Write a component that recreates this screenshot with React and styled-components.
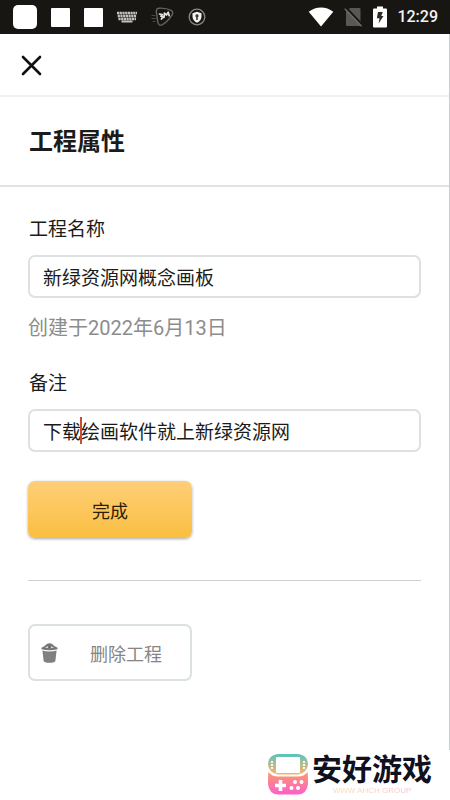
import React from 'react';
import styled, { createGlobalStyle } from 'styled-components';

const GlobalStyle = createGlobalStyle`
  * {
    box-sizing: border-box;
  }

  body {
    margin: 0;
    background: #fff;
    color: #1b1b19;
    font-family: Roboto, 'Noto Sans CJK SC', sans-serif;
  }
`;

const Screen = styled.div`
  display: flex;
  flex-direction: column;
  min-height: 100vh;
`;

const StatusBar = styled.div`
  display: flex;
  align-items: center;
  justify-content: space-between;
  height: 34px;
  padding: 0 12px 0 13px;
  background: #181612;
`;

const StatusGroup = styled.div`
  display: flex;
  align-items: center;
  gap: ${({ $gap }) => $gap}px;
`;

const Tile = styled.span`
  width: ${({ $large }) => ($large ? 24 : 19)}px;
  height: ${({ $large }) => ($large ? 24 : 19)}px;
  border-radius: ${({ $large }) => ($large ? 5 : 1)}px;
  background: #fff;
`;

const Clock = styled.time`
  color: #f4f3f1;
  font-size: 16px;
  font-weight: 500;
  line-height: 20px;
`;

const Panel = styled.div`
  flex: 1;
  border-right: 1px solid #c9cfcf;
`;

const TopBar = styled.div`
  display: flex;
  align-items: center;
  height: 63px;
  padding: 2px 20px 0;
  border-bottom: 2px solid #f0f0f0;
`;

const CloseButton = styled.button`
  display: flex;
  padding: 0;
  border: 0;
  background: none;
  color: #111;
`;

const Heading = styled.header`
  padding: 29px 29px 27px;
  border-bottom: 2px solid #e1e3e3;
`;

const Title = styled.h1`
  margin: 0;
  font-size: 24px;
  font-weight: 700;
  line-height: 32px;
`;

const Form = styled.form`
  padding: 31px 28px 28px;
`;

const Label = styled.label`
  display: block;
  margin-bottom: 13px;
  padding-left: 1px;
  font-size: 19px;
  line-height: 24px;
`;

const Field = styled.div`
  position: relative;
  font-size: 19px;
`;

const TextInput = styled.input`
  display: block;
  width: 100%;
  height: 43px;
  padding: 0 13px;
  border: 2px solid #dde1e1;
  border-radius: 7px;
  outline: 0;
  background: #fff;
  color: #1b1b19;
  font-family: inherit;
  font-size: inherit;
`;

/* text cursor, placed after a number of full-width characters */
const Caret = styled.span`
  position: absolute;
  top: 8px;
  left: calc(14px + ${({ $after }) => $after}em);
  width: 2px;
  height: 27px;
  background: #cf4a30;
`;

const Created = styled.p`
  margin: 18px 0 32px;
  color: #8c8c8c;
  font-size: 20px;
  line-height: 24px;
`;

const Button = styled.button`
  display: block;
  width: 164px;
  height: 57px;
  padding: 0;
  border-radius: 7px;
  font-family: inherit;
  font-size: 18px;
`;

const DoneButton = styled(Button)`
  margin-top: 29px;
  border: 0;
  background: linear-gradient(#ffce78, #f9bf40);
  box-shadow: 0 1px 3px rgba(0, 0, 0, 0.35);
  color: #2b1d06;
`;

const DeleteButton = styled(Button)`
  display: flex;
  align-items: center;
  gap: 32px;
  padding-left: 11px;
  border: 2px solid #dbe1e1;
  background: #fff;
  color: #858585;
`;

const Divider = styled.hr`
  height: 1px;
  margin: 42px 0 43px;
  border: 0;
  background: #cfcfcf;
`;

const Footer = styled.footer`
  display: flex;
  justify-content: flex-end;
  gap: 4px;
  height: 50px;
  padding: 4px 18px 0 0;
`;

const Brand = styled.div`
  display: flex;
  flex-direction: column;
  align-items: center;
  color: #10101e;
  font-size: 30px;
  font-weight: 700;
  line-height: 32px;
`;

const Site = styled.small`
  background: linear-gradient(90deg, #f7dcb8, #f3c3cf);
  background-clip: text;
  color: transparent;
  font-family: 'Liberation Sans', sans-serif;
  font-size: 8px;
  font-weight: 400;
  line-height: 10px;
`;

const KeyboardIcon = () => (
  <svg width="20" height="12" viewBox="0 0 20 12" fill="none" stroke="#c4c3c0">
    <path d="M0 2H20M0.7 5H19.5M1.4 8H19" strokeWidth="2.4" strokeDasharray="2.2 0.5" />
    <path d="M4.5 10.5H15.5" strokeWidth="2" />
  </svg>
);

const PickIcon = () => (
  <svg width="23" height="20" viewBox="0 0 23 20" fill="none" strokeLinecap="round" strokeLinejoin="round">
    <path d="M8 1.2C12 1 17 1.8 20.5 3.6C22.2 4.7 22 6.6 20.8 8.4C18.4 12 14.5 16 11 17.8C8.7 18.8 7.3 17.5 6.8 15.2L5.4 5.4C5 2.7 5.8 1.3 8 1.2Z" stroke="#666460" strokeWidth="1.4" />
    <path d="M1 8.5H4M0.8 11.5H4.5M2 14.5H4" stroke="#4c4a46" />
    <path d="M8.5 7L11.2 7.6L9.8 9.2L12.3 9.6L10.4 12M13 10.5L13.4 6.2L15.5 8L17.2 5.2L18.2 8.7" stroke="#e3e2df" strokeWidth="1.7" />
  </svg>
);

const ShieldIcon = () => (
  <svg width="18" height="18" viewBox="0 0 18 18">
    <circle cx="9" cy="9" r="7.8" fill="none" stroke="#8b8985" strokeWidth="1.3" />
    <path d="M9 3.7L13.5 5.2V8.5C13.5 11.5 11.6 13.5 9 14.7C6.4 13.5 4.5 11.5 4.5 8.5V5.2Z" fill="#f3f3f1" />
    <path d="M9 6.2A1.6 1.6 0 0 1 9.8 9.2V12H8.2V9.2A1.6 1.6 0 0 1 9 6.2Z" fill="#3b3935" />
  </svg>
);

const WifiIcon = () => (
  <svg width="26" height="20" viewBox="0 0 26 20">
    <path d="M0.7 4.8C8 -1 18 -1 25.3 4.8L13 19.5Z" fill="#fff" />
  </svg>
);

const NoSimIcon = () => (
  <svg width="19" height="20" viewBox="0 0 19 20">
    <path d="M6 1H15.5Q16.5 1 16.5 2V18Q16.5 19 15.5 19H3Q2 19 2 18V5Z" fill="#5a5854" />
    <path d="M2 0.5L19 18.5" stroke="#181612" strokeWidth="2" />
    <path d="M0.8 1.8L17.6 19.3" stroke="#6d6b67" strokeWidth="1.5" />
  </svg>
);

const BatteryIcon = () => (
  <svg width="14" height="22" viewBox="0 0 14 22">
    <path d="M4 0.5H10V2.5H13Q14 2.5 14 3.5V20.5Q14 21.5 13 21.5H1Q0 21.5 0 20.5V3.5Q0 2.5 1 2.5H4Z" fill="#fff" />
    <path d="M5 6H9.8L8.2 10H10.5L5.6 17.5L6.5 12.3H3.8Z" fill="#2c2a26" />
  </svg>
);

const CloseIcon = () => (
  <svg width="23" height="23" viewBox="0 0 23 23">
    <path d="M3 3L20 20M20 3L3 20" stroke="currentColor" strokeWidth="2.6" strokeLinecap="round" />
  </svg>
);

const TrashIcon = () => (
  <svg width="17" height="20" viewBox="0 0 17 20">
    <path d="M0.5 4.8Q4.5 2.8 5.2 1.6Q8.5 -0.9 11.8 1.6Q12.5 2.8 16.5 4.8V6.2Q8.5 8.4 0.5 6.2Z" fill="#777" />
    <path d="M4 4.5Q8.5 1.5 13 4.5Q8.5 6 4 4.5Z" fill="#ddd" />
    <circle cx="8.5" cy="3.9" r="1.5" fill="#666" />
    <path d="M1.4 7.6Q8.5 9.5 15.6 7.6L14.4 17.7Q14 19.7 8.5 19.8Q3 19.7 2.6 17.7Z" fill="#808080" />
  </svg>
);

const ConsoleLogo = () => (
  <svg width="40" height="41" viewBox="0 0 40 41">
    <defs>
      <linearGradient id="screenHalf" x1="0" y1="0" x2="0" y2="1">
        <stop offset="0" stopColor="#55c4bd" />
        <stop offset="0.5" stopColor="#b5bd92" />
        <stop offset="1" stopColor="#fbb264" />
      </linearGradient>
      <linearGradient id="padHalf" x1="0" y1="0" x2="0" y2="1">
        <stop offset="0" stopColor="#fb9b6b" />
        <stop offset="1" stopColor="#fb5fce" />
      </linearGradient>
    </defs>
    <path d="M10 0H30Q40 1 40 10.5Q39 19 30 20.5H10Q1 19 0 10.5Q0 1 10 0Z" fill="url(#screenHalf)" />
    <rect x="8" y="3" width="24" height="16" rx="1" fill="#fff" />
    <path d="M4 7V15M36 7V15" stroke="#fff" strokeWidth="1.8" strokeDasharray="2 1" />
    <path d="M0.5 18Q4 22.5 10 22.5H30Q36 22.5 39.5 18Q40 20 40 30Q39 40 30 40.5H10Q1 40 0 30Q0 20 0.5 18Z" fill="url(#padHalf)" />
    <path d="M12.5 26V37M7 31.5H18" stroke="#fff" strokeWidth="3.6" />
    <g fill="#fff">
      <circle cx="27" cy="28" r="2" />
      <circle cx="33.5" cy="28" r="2" />
      <circle cx="23.5" cy="34" r="2" />
      <circle cx="30" cy="34" r="2" />
    </g>
  </svg>
);

const App = () => {
  return (
    <>
      <GlobalStyle />
      <Screen>
        <StatusBar>
          <StatusGroup $gap={14}>
            <Tile $large />
            <Tile />
            <Tile />
            <KeyboardIcon />
            <PickIcon />
            <ShieldIcon />
          </StatusGroup>
          <StatusGroup $gap={10}>
            <WifiIcon />
            <NoSimIcon />
            <BatteryIcon />
            <Clock>12:29</Clock>
          </StatusGroup>
        </StatusBar>

        <Panel>
          <TopBar>
            <CloseButton type="button" aria-label="关闭">
              <CloseIcon />
            </CloseButton>
          </TopBar>
          <Heading>
            <Title>工程属性</Title>
          </Heading>
          <Form onSubmit={(e) => e.preventDefault()}>
            <Label htmlFor="name">工程名称</Label>
            <Field>
              <TextInput id="name" type="text" defaultValue="新绿资源网概念画板" />
            </Field>
            <Created>创建于2022年6月13日</Created>
            <Label htmlFor="note">备注</Label>
            <Field>
              <TextInput id="note" type="text" defaultValue="下载绘画软件就上新绿资源网" />
              <Caret $after={2} />
            </Field>
            <DoneButton type="submit">完成</DoneButton>
            <Divider />
            <DeleteButton type="button">
              <TrashIcon />
              删除工程
            </DeleteButton>
          </Form>
        </Panel>

        <Footer>
          <ConsoleLogo />
          <Brand>
            安好游戏
            <Site>WWW AHCH GROUP</Site>
          </Brand>
        </Footer>
      </Screen>
    </>
  );
};

export default App;
